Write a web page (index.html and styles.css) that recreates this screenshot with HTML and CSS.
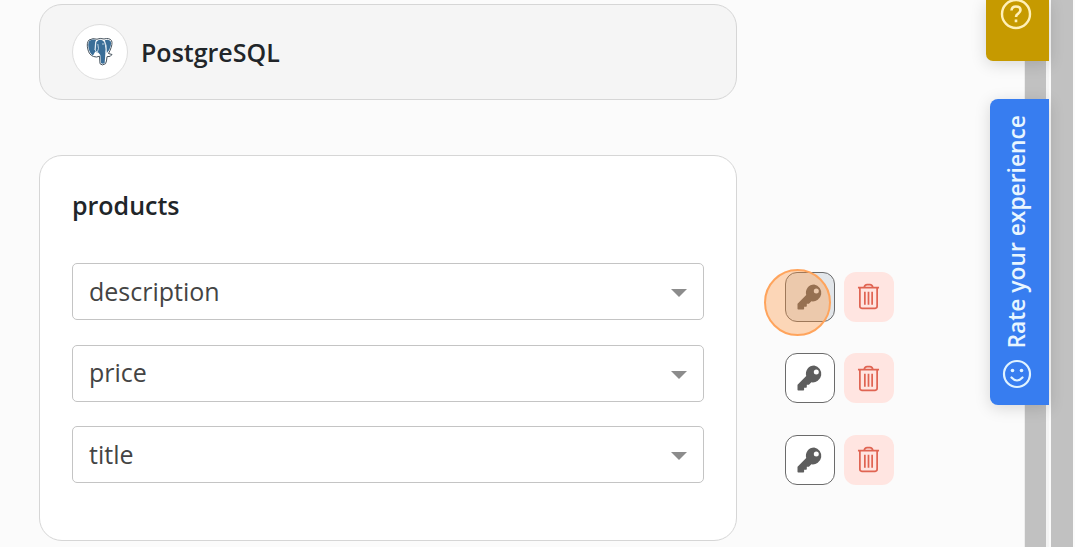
FILE: index.html
```html
<!DOCTYPE html>
<html lang="en">

<head>
    <meta charset="UTF-8">
    <meta name="viewport" content="width=device-width, initial-scale=1.0">
    <title>PostgreSQL - products</title>
    <link rel="stylesheet" href="styles.css">
</head>

<body>
    <!-- shared icons -->
    <svg class="sprite" width="0" height="0">
        <symbol id="key" viewBox="0 0 26 26">
            <path fill-rule="evenodd" d="M17.2 0.5a8.3 8.3 0 0 0-8 10.6L.8 19.5a.8.8 0 0 0-.3.6v4.7c0 .4.3.7.7.7h5.2c.4 0 .7-.3.7-.7v-2h2c.4 0 .7-.3.7-.7v-2.3h2.100l2.500-2.500a8.400 8.400 0 1 0 2.800-16.800zM19.300 4.400a2.500 2.500 0 1 1 0 5 2.500 2.500 0 0 1 0-5z"/>
        </symbol>
        <symbol id="trash" viewBox="0 0 24 28">
            <g fill="none" stroke="currentColor" stroke-width="1.8">
                <path d="M1 4.800h22M7.500 4.500Q8 1.500 10.500 1.500h3q2.500 0 3 3M3 5v19.300q0 2 2 2h14q2 0 2-2V5M8.200 9v13.500M12 9v13.500M15.800 9v13.500"/>
            </g>
        </symbol>
    </svg>

    <div class="page">
        <div class="content">
            <div class="card source">
                <div class="logo">
                    <svg width="28" height="30" viewBox="0 0 28 30">
                        <path fill="#fff" stroke="#46535e" stroke-width="1" d="M3 3Q7 .8 11 2.200 14 .8 18 2q5-1.500 7.500 1.500 1.500 3-1.500 10l-1.500 3 3.500 1q-1 2.500-5 2.200-.3 5-1.500 7-3.500 2.500-5.500 0l-.5-7.500q-3 1.500-6 .3Q3 18 1.800 12 .3 6 3 3z"/>
                        <path fill="#3a6e98" d="M3.200 4Q7 1.700 10 3L9 6.500l.3 8L7 18.500Q4 17 2.700 11.500 1.600 6.500 3.200 4zM10.300 5Q14 .5 18.300 5l1.500 7.500L19.300 17l-.6 9q-1.700 1.600-3.700 0L14.300 18l-2-2.500-2.700-.5zM18.800 3.200Q23 2 24.800 4.500q1 2.500-1.600 8.500L20.800 16l-.3-4z"/>
                        <path fill="none" stroke="#dce8f1" stroke-width=".8" d="M9.700 4.500L8.800 13l2.500 2.200 1.200-3.700-.7-4.500M18.500 4l1.800 5-.5 7M16 7h2"/>
                    </svg>
                </div>
                <span class="source-name">PostgreSQL</span>
            </div>

            <div class="card table">
                <h2>products</h2>
                <div class="row">
                    <div class="select"><span>description</span></div>
                    <button class="btn key active">
                        <svg width="26" height="26"><use href="#key"/></svg>
                        <span class="click"></span>
                    </button>
                    <button class="btn delete"><svg width="23" height="27"><use href="#trash"/></svg></button>
                </div>
                <div class="row">
                    <div class="select"><span>price</span></div>
                    <button class="btn key"><svg width="26" height="26"><use href="#key"/></svg></button>
                    <button class="btn delete"><svg width="23" height="27"><use href="#trash"/></svg></button>
                </div>
                <div class="row">
                    <div class="select"><span>title</span></div>
                    <button class="btn key"><svg width="26" height="26"><use href="#key"/></svg></button>
                    <button class="btn delete"><svg width="23" height="27"><use href="#trash"/></svg></button>
                </div>
            </div>
        </div>

        <div class="scroll inner"></div>
        <div class="scroll outer"></div>

        <div class="help">
            <svg width="32" height="32" viewBox="0 0 32 32" fill="none" stroke="#fff0b8" stroke-width="2.400">
                <circle cx="16" cy="16" r="14"/>
                <path stroke-width="2.600" d="M11.500 12.500q.3-4 4.500-4 4.500 0 4.500 3.600 0 2-2.300 3.500-2.200 1.300-2.200 3.400M16 21.500v2.800"/>
            </svg>
        </div>
        <div class="rate">
            <span class="rate-text">Rate your experience</span>
            <svg width="30" height="30" viewBox="0 0 30 30" fill="none" stroke="#e0f3ff" stroke-width="2.200">
                <circle cx="15" cy="15" r="13"/>
                <path stroke-linecap="round" d="M9.500 18.500q5.500 6 11 0"/>
                <g fill="#e0f3ff" stroke="none">
                    <circle cx="10.500" cy="11.500" r="1.800"/>
                    <circle cx="19.500" cy="11.500" r="1.800"/>
                </g>
            </svg>
        </div>
    </div>
</body>

</html>
```

FILE: styles.css
```css
* {
    box-sizing: border-box;
}

body {
    margin: 0;
    height: 547px;
    overflow: hidden;
    background-color: #fbfbfb;
    font-family: "Open Sans", "Noto Sans", sans-serif;
    color: #212529;
}

.sprite {
    position: absolute;
}

.page {
    position: relative;
    display: flex;
    height: 547px;
}

.content {
    width: 1024px;
    padding: 4px 0 0 39px;
}

.card {
    width: 697.5px;
    border: 1px solid #d6d6d6;
    border-radius: 23px;
}

.source {
    display: flex;
    align-items: center;
    gap: 13px;
    height: 96px;
    padding: 0 32px;
    background-color: #f5f5f5;
}

.logo {
    display: flex;
    align-items: center;
    justify-content: center;
    width: 56px;
    height: 56px;
    border: 1px solid #dedede;
    border-radius: 50%;
    background-color: white;
}

.source-name {
    padding-bottom: 1px;
    font-size: 25px;
    font-weight: 600;
}

.table {
    height: 386px;
    margin-top: 55px;
    padding: 32px;
    background-color: white;
}

h2 {
    margin: 0 0 40px;
    font-size: 25px;
    font-weight: 600;
    line-height: 35px;
}

.row {
    display: flex;
    width: 822px;
    height: 57px;
    margin-bottom: 24.6px;
}

.select {
    display: flex;
    align-items: center;
    justify-content: space-between;
    width: 632px;
    height: 57px;
    margin-right: 80.5px;
    padding: 0 16px;
    border: 1px solid #c4c4c4;
    border-radius: 5px;
    font-size: 25px;
    color: #444;
}

.select span {
    padding-bottom: 2px;
}

.select::after {
    content: "";
    margin-top: 3px;
    border: 8px solid transparent;
    border-top-color: #8c8c8c;
    border-bottom: 0;
}

.btn {
    display: flex;
    flex-shrink: 0;
    align-items: center;
    justify-content: center;
    width: 50px;
    height: 50px;
    margin-top: 8.5px;
    padding: 0;
    border-radius: 12px;
}

.key {
    position: relative;
    margin-right: 9px;
    border: 1px solid #6b6b6b;
    background-color: white;
    fill: #5e5e5e;
}

.active {
    background-color: #e2e6ea;
}

/* click marker over the key button */
.click {
    position: absolute;
    top: -4px;
    left: -22px;
    width: 67px;
    height: 67px;
    border: 2px solid #ffa45c;
    border-radius: 50%;
    background-color: rgba(255, 145, 56, 0.35);
}

.delete {
    border: none;
    background-color: #ffe5e1;
    color: #e06452;
}

.scroll {
    height: 547px;
    background-color: #c1c1c1;
}

.inner {
    width: 25px;
    border-left: 1px solid #eee;
    border-right: 3px solid #f4f4f4;
}

.outer {
    width: 22px;
    margin-left: 2px;
}

.help {
    position: absolute;
    top: 0;
    left: 986px;
    width: 63px;
    height: 61px;
    padding: 0 0 0 14px;
    border-radius: 0 0 0 7px;
    background-color: #c69a00;
    box-shadow: 0 3px 16px rgba(0, 0, 0, 0.15);
    overflow: hidden;
}

.help svg {
    display: block;
    margin-top: -2px;
}

.rate {
    position: absolute;
    top: 99px;
    left: 989.5px;
    display: flex;
    flex-direction: column;
    align-items: center;
    justify-content: space-between;
    width: 59.5px;
    height: 306px;
    padding: 16px 4px 16px 0;
    border-radius: 8px 0 0 8px;
    background-color: #377df0;
    box-shadow: 0 3px 16px rgba(0, 0, 0, 0.15);
}

.rate-text {
    writing-mode: vertical-rl;
    transform: rotate(180deg);
    color: #e8f6ff;
    font-size: 22.8px;
    font-weight: 600;
    line-height: 34px;
    white-space: nowrap;
}
```
